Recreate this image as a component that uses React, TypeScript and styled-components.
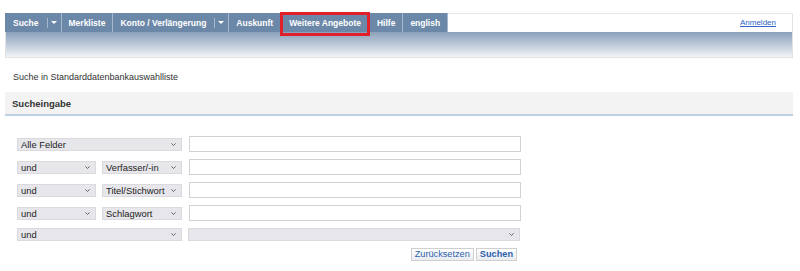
import React from "react";
import styled, { createGlobalStyle } from "styled-components";

const Global = createGlobalStyle`
	body {
		margin: 0;
		background: #fff;
		font-family: "Liberation Sans", Arial, sans-serif;
	}
`;

const Page = styled.div`
	padding: 13px 0 0 5px;
	width: 788px;
`;

const Header = styled.div`
	border: 1px solid #e2e2e2;
	border-top-color: #e8e8e8;
`;

const TabRow = styled.div`
	display: flex;
	height: 19px;
	margin-top: -1px;
	margin-left: -1px;
`;

const Tab = styled.div<{ $marked?: boolean }>`
	position: relative;
	display: flex;
	align-items: center;
	padding: 0 7px;
	background: #6c88a9;
	color: #fff;
	font-size: 8.5px;
	font-weight: bold;
	border-right: 1px solid #a7b8cb;
	white-space: nowrap;
	cursor: pointer;
	&:first-child {
		padding-left: 8px;
	}
	${(p) =>
		p.$marked &&
		`
		padding: 0 8px;
		&::after {
			content: "";
			position: absolute;
			left: -1px;
			right: -1px;
			top: -1px;
			bottom: -4px;
			border: 3px solid #e2202b;
			pointer-events: none;
		}
	`}
`;

const Sep = styled.span`
	width: 1px;
	height: 10px;
	background: #a7b8cb;
	margin: 0 3px 0 8px;
`;

const Caret = styled.span`
	width: 0;
	height: 0;
	border-left: 3px solid transparent;
	border-right: 3px solid transparent;
	border-top: 3px solid #fff;
	margin-right: -3px;
`;

const Login = styled.a`
	margin-left: auto;
	align-self: center;
	padding-right: 16px;
	font-size: 8px;
	color: #2f63c4;
	text-decoration: underline;
`;

const Band = styled.div`
	height: 25px;
	background: linear-gradient(#8ba1bb, #c2cddb 55%, #f3f5f8);
`;

const Info = styled.div`
	margin-top: 14px;
	padding-left: 8px;
	font-size: 9px;
	color: #333;
`;

const SectionHead = styled.div`
	margin-top: 10px;
	height: 22px;
	display: flex;
	align-items: center;
	padding-left: 7px;
	background: #f3f3f3;
	border-bottom: 2px solid #bcd1e4;
	font-size: 9.5px;
	font-weight: bold;
	color: #333;
`;

const Form = styled.form`
	margin-top: 20px;
	padding-left: 12px;
	width: 504px;
	display: flex;
	flex-direction: column;
	gap: 7px;
`;

const Row = styled.div`
	display: flex;
	align-items: center;
	gap: 6px;
`;

const SelectWrap = styled.div<{ $w: number }>`
	position: relative;
	width: ${(p) => p.$w}px;
	height: 13px;
	flex: none;
`;

const Select = styled.select`
	display: block;
	appearance: none;
	width: 100%;
	height: 100%;
	box-sizing: border-box;
	margin: 0;
	padding: 0 12px 0 3px;
	border: 1px solid #dadade;
	background: #e7e7eb;
	font-family: "Liberation Sans", Arial, sans-serif;
	font-size: 9.4px;
	line-height: 11px;
	color: #222;
	outline: none;
`;

const Chevron = styled.svg`
	position: absolute;
	right: 6px;
	top: 5px;
	width: 5px;
	height: 3px;
	pointer-events: none;
`;

const Input = styled.input`
	display: block;
	width: 332px;
	height: 16px;
	box-sizing: border-box;
	margin: 0 0 0 1px;
	border: 1px solid #d2d2d2;
	background: #fff;
	outline: none;
`;

const Buttons = styled.div`
	display: flex;
	justify-content: flex-end;
	gap: 2px;
	padding-right: 4px;
`;

const Button = styled.button<{ $primary?: boolean }>`
	height: 13px;
	padding: 0 3px;
	border: 1px solid #cfcfcf;
	background: linear-gradient(#ffffff, #e9ecf0);
	color: #2c5fab;
	font-family: "Liberation Sans", Arial, sans-serif;
	font-size: 9.2px;
	font-weight: ${(p) => (p.$primary ? "bold" : "normal")};
	line-height: 11px;
	cursor: pointer;
`;

const Drop = ({ w, options }: { w: number; options: string[] }) => (
	<SelectWrap $w={w}>
		<Select>
			{options.map((o) => (
				<option key={o}>{o}</option>
			))}
		</Select>
		<Chevron viewBox="0 0 5 3">
			<path d="M0.4 0.4 L2.5 2.5 L4.6 0.4" fill="none" stroke="#555" strokeWidth="0.9" />
		</Chevron>
	</SelectWrap>
);

export default function App() {
	return (
		<Page>
			<Global />
			<Header>
				<TabRow>
					<Tab>
						Suche
						<Sep />
						<Caret />
					</Tab>
					<Tab>Merkliste</Tab>
					<Tab>
						Konto / Verlängerung
						<Sep />
						<Caret />
					</Tab>
					<Tab>Auskunft</Tab>
					<Tab $marked>Weitere Angebote</Tab>
					<Tab>Hilfe</Tab>
					<Tab>english</Tab>
					<Login href="#">Anmelden</Login>
				</TabRow>
				<Band />
			</Header>
			<Info>Suche in Standarddatenbankauswahlliste</Info>
			<SectionHead>Sucheingabe</SectionHead>
			<Form onSubmit={(e) => e.preventDefault()}>
				<Row>
					<Drop w={165} options={["Alle Felder"]} />
					<Input type="text" />
				</Row>
				<Row>
					<Drop w={79} options={["und"]} />
					<Drop w={80} options={["Verfasser/-in"]} />
					<Input type="text" />
				</Row>
				<Row>
					<Drop w={79} options={["und"]} />
					<Drop w={80} options={["Titel/Stichwort"]} />
					<Input type="text" />
				</Row>
				<Row>
					<Drop w={79} options={["und"]} />
					<Drop w={80} options={["Schlagwort"]} />
					<Input type="text" />
				</Row>
				<Row>
					<Drop w={165} options={["und"]} />
					<Drop w={332} options={[""]} />
				</Row>
				<Buttons>
					<Button type="reset">Zurücksetzen</Button>
					<Button type="submit" $primary>
						Suchen
					</Button>
				</Buttons>
			</Form>
		</Page>
	);
}
